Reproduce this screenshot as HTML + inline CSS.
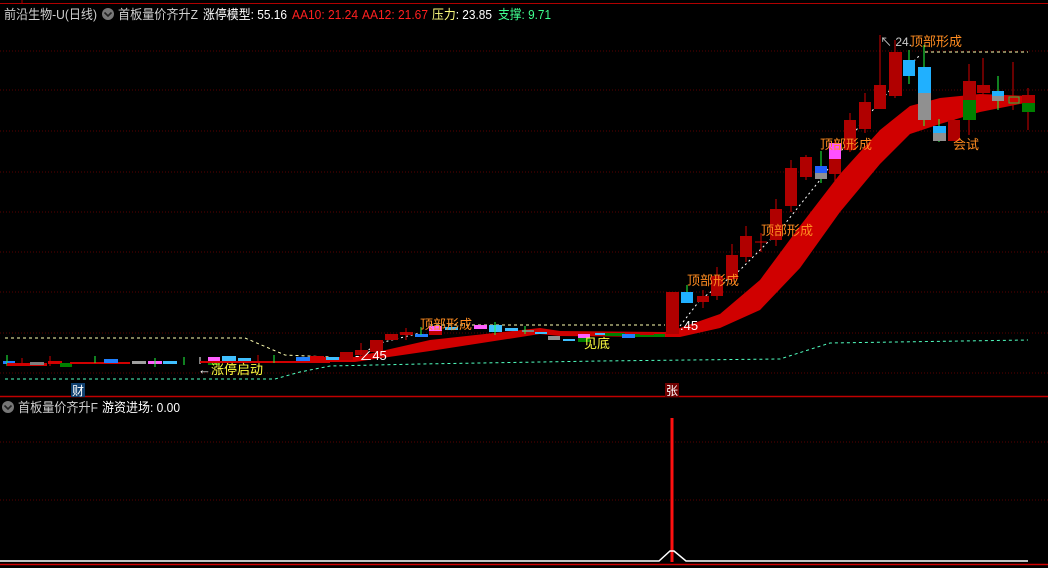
<!DOCTYPE html>
<html><head><meta charset="utf-8"><style>
html,body{margin:0;padding:0;background:#000;width:1048px;height:568px;overflow:hidden}
svg{display:block}
text{font-family:"Liberation Sans","Noto Sans CJK SC",sans-serif}
</style></head><body>
<svg width="1048" height="568" viewBox="0 0 1048 568" xmlns="http://www.w3.org/2000/svg">
<rect width="1048" height="568" fill="#000"/>
<line x1="0" y1="3.5" x2="1048" y2="3.5" stroke="#b00000" stroke-width="1"/>
<line x1="22" y1="0" x2="22" y2="4" stroke="#b00000"/>
<g stroke="#5a0000" stroke-width="1" stroke-dasharray="1,2">
<line x1="0" y1="51" x2="1048" y2="51"/><line x1="0" y1="90" x2="1048" y2="90"/>
<line x1="0" y1="131" x2="1048" y2="131"/><line x1="0" y1="172" x2="1048" y2="172"/>
<line x1="0" y1="212" x2="1048" y2="212"/><line x1="0" y1="252" x2="1048" y2="252"/>
<line x1="0" y1="292" x2="1048" y2="292"/><line x1="0" y1="333" x2="1048" y2="333"/>
<line x1="0" y1="373" x2="1048" y2="373"/>
<line x1="0" y1="442" x2="1048" y2="442"/><line x1="0" y1="500" x2="1048" y2="500"/>
</g>
<line x1="0" y1="396.5" x2="1048" y2="396.5" stroke="#c00000" stroke-width="1.5"/>
<!-- header -->
<text x="4" y="19" font-size="13" fill="#d0d0d0" textLength="93" lengthAdjust="spacingAndGlyphs">前沿生物-U(日线)</text>
<circle cx="108" cy="14" r="6" fill="#777"/><path d="M104.5 12.5 L108 16 L111.5 12.5" stroke="#222" stroke-width="1.6" fill="none"/>
<text x="118" y="19" font-size="13" fill="#d0d0d0" textLength="80" lengthAdjust="spacingAndGlyphs">首板量价齐升Z</text>
<text x="203" y="19" font-size="13" fill="#ffffff" textLength="84" lengthAdjust="spacingAndGlyphs">涨停模型: 55.16</text>
<text x="292" y="19" font-size="13" fill="#ff2020" textLength="66" lengthAdjust="spacingAndGlyphs">AA10: 21.24</text>
<text x="362" y="19" font-size="13" fill="#ff2020" textLength="66" lengthAdjust="spacingAndGlyphs">AA12: 21.67</text>
<text x="432" y="19" font-size="13" fill="#ffff80" textLength="60" lengthAdjust="spacingAndGlyphs">压力<tspan fill="#fff">: 23.85</tspan></text>
<text x="498" y="19" font-size="13" fill="#40ff90" textLength="53" lengthAdjust="spacingAndGlyphs">支撑: 9.71</text>
<!-- dashed lines -->
<polyline points="5,338 245,338 285,355 330,357" fill="none" stroke="#ffffb0" stroke-width="1" stroke-dasharray="3,3"/>
<polyline points="5,379 275,379 300,372 330,366 420,364 600,361 780,359 830,343 1028,340" fill="none" stroke="#50ffc0" stroke-width="1" stroke-dasharray="3,3"/>
<polyline points="430,325 665,325" fill="none" stroke="#ffffb0" stroke-dasharray="3,3"/>
<polyline points="925,52 1028,52" fill="none" stroke="#ffffb0" stroke-dasharray="3,3"/>
<polyline points="360,355 380,343 420,333" fill="none" stroke="#fff" stroke-dasharray="2,3"/>
<polyline points="680,326 700,300 740,270 780,230 820,180 860,125 890,90 905,70 920,55" fill="none" stroke="#fff" stroke-dasharray="2,3"/>
<!-- red band -->
<path d="M300,357 L355,357 L430,340 L540,328 L560,331 L665,332 L680,328 L720,314 L760,280 L800,226 L840,174 L880,130 L910,106 L940,98 L980,94 L1030,96 L1030,102 L980,112 L940,124 L910,134 L880,164 L840,212 L800,268 L760,310 L720,328 L680,337 L665,337 L560,336 L540,334 L430,351 L355,362 L300,362 Z" fill="#d00000"/>
<!-- left small candles -->
<g>
<rect x="3" y="361" width="12" height="3" fill="#2080ff"/><line x1="7" y1="355" x2="7" y2="366" stroke="#20ff40"/>
<rect x="7" y="363" width="40" height="3" fill="#d00000"/>
<line x1="22" y1="358" x2="22" y2="366" stroke="#d00000"/>
<rect x="30" y="362" width="14" height="3" fill="#808080"/>
<rect x="48" y="361" width="14" height="3" fill="#d00000"/><line x1="50" y1="356" x2="50" y2="366" stroke="#d00000"/>
<rect x="60" y="363" width="12" height="4" fill="#008000"/>
<rect x="70" y="362" width="60" height="2" fill="#d00000"/>
<rect x="104" y="359" width="14" height="4" fill="#2080ff"/>
<line x1="95" y1="356" x2="95" y2="363" stroke="#20ff40"/>
<rect x="132" y="361" width="14" height="3" fill="#a0a0a0"/>
<rect x="148" y="361" width="14" height="3" fill="#ff60ff"/><line x1="155" y1="358" x2="155" y2="367" stroke="#20ff40"/>
<rect x="163" y="361" width="14" height="3" fill="#40c0ff"/>
<line x1="184" y1="357" x2="184" y2="365" stroke="#20ff40"/>
<line x1="200" y1="357" x2="200" y2="364" stroke="#fff"/>
<rect x="208" y="357" width="12" height="4" fill="#ff60ff"/><rect x="208" y="361" width="12" height="4" fill="#008000"/>
<rect x="222" y="356" width="14" height="5" fill="#40c0ff"/>
<rect x="238" y="358" width="13" height="3" fill="#40c0ff"/>
<rect x="200" y="361" width="130" height="2" fill="#d00000"/>
<line x1="258" y1="355" x2="258" y2="363" stroke="#d00000"/>
<line x1="274" y1="355" x2="274" y2="363" stroke="#20ff40"/>
<rect x="296" y="357" width="14" height="4" fill="#2080ff"/>
<rect x="310" y="356" width="14" height="5" fill="#d00000"/>
<rect x="326" y="357" width="13" height="3" fill="#40c0ff"/>
<rect x="340" y="352" width="13" height="8" fill="#b00000"/>
<rect x="355" y="350" width="13" height="5" fill="#b00000"/><line x1="361" y1="343" x2="361" y2="355" stroke="#d00000"/>
<rect x="370" y="340" width="13" height="12" fill="#b00000"/>
<rect x="385" y="334" width="13" height="6" fill="#b00000"/>
<rect x="400" y="332" width="13" height="3" fill="#b00000"/><line x1="406" y1="328" x2="406" y2="340" stroke="#d00000"/>
<rect x="415" y="334" width="13" height="3" fill="#2080ff"/><line x1="421" y1="327" x2="421" y2="335" stroke="#20ff40"/>
<rect x="429" y="326" width="13" height="5" fill="#ff60ff"/><rect x="429" y="331" width="13" height="4" fill="#c00000"/>
<rect x="445" y="327" width="13" height="3" fill="#40c0ff"/>
<rect x="474" y="325" width="13" height="4" fill="#ff60ff"/>
<rect x="489" y="325" width="13" height="7" fill="#40c0ff"/><line x1="495" y1="322" x2="495" y2="335" stroke="#20ff40"/>
<rect x="505" y="328" width="13" height="3" fill="#40c0ff"/>
<rect x="522" y="330" width="12" height="2" fill="#808080"/><line x1="525" y1="326" x2="525" y2="334" stroke="#20ff40"/>
<rect x="535" y="332" width="12" height="2" fill="#40c0ff"/>
<rect x="548" y="336" width="12" height="4" fill="#909090"/>
<rect x="563" y="339" width="12" height="2" fill="#40c0ff"/>
<rect x="578" y="334" width="12" height="4" fill="#ff60ff"/><rect x="578" y="338" width="12" height="4" fill="#008000"/>
<rect x="595" y="333" width="12" height="2" fill="#40c0ff"/>
<rect x="605" y="333" width="20" height="3" fill="#008000"/>
<rect x="622" y="334" width="13" height="4" fill="#2080ff"/>
<rect x="635" y="334" width="30" height="3" fill="#008000"/>
<rect x="640" y="333" width="14" height="2" fill="#c00000"/>
</g>
<!-- right candles -->
<g>
<rect x="666" y="292" width="13" height="42" fill="#b00000"/>
<rect x="681" y="292" width="12" height="11" fill="#20b0ff"/><line x1="687" y1="285" x2="687" y2="292" stroke="#20ff40"/>
<line x1="703" y1="290" x2="703" y2="308" stroke="#d00000"/><rect x="697" y="296" width="12" height="6" fill="#b00000"/>
<line x1="717" y1="267" x2="717" y2="300" stroke="#d00000"/><rect x="711" y="276" width="12" height="20" fill="#b00000"/>
<line x1="732" y1="244" x2="732" y2="282" stroke="#d00000"/><rect x="726" y="255" width="12" height="24" fill="#b00000"/>
<line x1="746" y1="226" x2="746" y2="262" stroke="#d00000"/><rect x="740" y="236" width="12" height="21" fill="#b00000"/>
<line x1="761" y1="233" x2="761" y2="252" stroke="#d00000"/><line x1="755" y1="242" x2="767" y2="242" stroke="#d00000"/>
<line x1="776" y1="199" x2="776" y2="246" stroke="#d00000"/><rect x="770" y="209" width="12" height="31" fill="#b00000"/>
<line x1="791" y1="160" x2="791" y2="212" stroke="#d00000"/><rect x="785" y="168" width="12" height="38" fill="#b00000"/>
<line x1="806" y1="155" x2="806" y2="180" stroke="#d00000"/><rect x="800" y="157" width="12" height="20" fill="#b00000"/>
<line x1="821" y1="151" x2="821" y2="183" stroke="#20ff40"/><rect x="815" y="166" width="12" height="7" fill="#2060ff"/><rect x="815" y="173" width="12" height="6" fill="#909090"/>
<line x1="835" y1="140" x2="835" y2="192" stroke="#d00000"/><rect x="829" y="143" width="12" height="16" fill="#ff50ff"/><rect x="829" y="159" width="12" height="15" fill="#b00000"/>
<line x1="850" y1="113" x2="850" y2="152" stroke="#d00000"/><rect x="844" y="120" width="12" height="30" fill="#b00000"/>
<line x1="865" y1="93" x2="865" y2="133" stroke="#d00000"/><rect x="859" y="102" width="12" height="27" fill="#b00000"/>
<line x1="880" y1="35" x2="880" y2="109" stroke="#d00000"/><rect x="874" y="85" width="12" height="24" fill="#b00000"/>
<line x1="895" y1="40" x2="895" y2="98" stroke="#d00000"/><rect x="889" y="52" width="13" height="44" fill="#b00000"/>
<line x1="909" y1="50" x2="909" y2="84" stroke="#20ff40"/><rect x="903" y="60" width="12" height="16" fill="#20b0ff"/>
<line x1="924" y1="45" x2="924" y2="126" stroke="#20ff40"/><rect x="918" y="67" width="13" height="26" fill="#20b0ff"/><rect x="918" y="93" width="13" height="27" fill="#909090"/>
<line x1="939" y1="119" x2="939" y2="142" stroke="#20ff40"/><rect x="933" y="126" width="13" height="7" fill="#20b0ff"/><rect x="933" y="133" width="13" height="8" fill="#909090"/>
<line x1="954" y1="112" x2="954" y2="141" stroke="#d00000"/><rect x="948" y="120" width="12" height="21" fill="#b00000"/>
<line x1="969" y1="64" x2="969" y2="135" stroke="#d00000"/><rect x="963" y="81" width="13" height="19" fill="#b00000"/><rect x="963" y="100" width="13" height="20" fill="#008000"/>
<line x1="983" y1="58" x2="983" y2="106" stroke="#d00000"/><rect x="977" y="85" width="13" height="8" fill="#b00000"/>
<line x1="998" y1="76" x2="998" y2="110" stroke="#20ff40"/><rect x="992" y="91" width="12" height="5" fill="#20b0ff"/><rect x="992" y="96" width="12" height="5" fill="#909090"/>
<line x1="1013" y1="62" x2="1013" y2="110" stroke="#d00000"/><rect x="1009" y="97" width="10" height="6" fill="none" stroke="#20c040"/>
<line x1="1028" y1="88" x2="1028" y2="130" stroke="#d00000"/><rect x="1022" y="95" width="13" height="8" fill="#b00000"/><rect x="1022" y="103" width="13" height="9" fill="#008000"/>
</g>
<!-- labels -->
<g font-size="13" fill="#ff8c20">
<text x="420" y="329">顶部形成</text>
<text x="687" y="285">顶部形成</text>
<text x="761" y="235">顶部形成</text>
<text x="820" y="149">顶部形成</text>
<text x="910" y="46">顶部形成</text>
<text x="953" y="149">会试</text>
</g>
<text x="584" y="348" font-size="13" fill="#ffff40">见底</text>
<text x="198" y="374" font-size="13" fill="#fff">←<tspan fill="#ffff40">涨停启动</tspan></text>
<text x="355" y="360" font-size="13" fill="#fff">-∠45</text>
<text x="680" y="330" font-size="13" fill="#fff">.45</text>
<text x="880" y="46" font-size="12" fill="#ccc">↖ 24.</text>
<rect x="71" y="383" width="14" height="14" fill="#104070"/><text x="72" y="395" font-size="12" fill="#fff">财</text>
<rect x="665" y="383" width="14" height="14" fill="#700000"/><text x="666" y="395" font-size="12" fill="#fff">张</text>
<!-- lower panel -->
<circle cx="8" cy="407" r="6" fill="#777"/><path d="M4.5 405.5 L8 409 L11.5 405.5" stroke="#222" stroke-width="1.6" fill="none"/>
<text x="18" y="412" font-size="13" fill="#d0d0d0" textLength="80" lengthAdjust="spacingAndGlyphs">首板量价齐升F</text>
<text x="102" y="412" font-size="13" fill="#fff" textLength="78" lengthAdjust="spacingAndGlyphs">游资进场: 0.00</text>
<line x1="672" y1="418" x2="672" y2="562" stroke="#ff1010" stroke-width="3"/>
<polyline points="0,561 659,561 670,551 674,551 686,561 1028,561" fill="none" stroke="#fff" stroke-width="1.5"/>
<line x1="0" y1="564.5" x2="1048" y2="564.5" stroke="#d00000" stroke-width="1.5"/>
</svg>
</body></html>
